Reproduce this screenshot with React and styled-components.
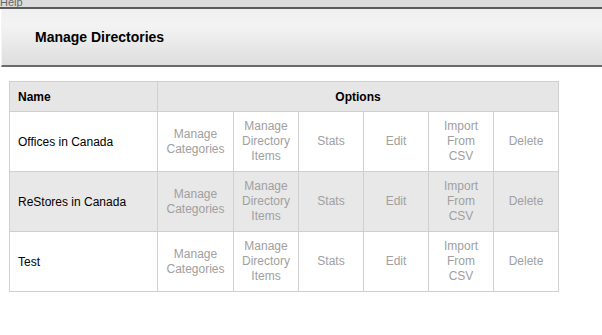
import styled, { createGlobalStyle } from "styled-components";

const GlobalStyle = createGlobalStyle`
  html, body {
    margin: 0;
    padding: 0;
    background: #fff;
    font-family: "Liberation Sans", Arial, sans-serif;
  }
`;

const Page = styled.div`
  width: 602px;
  height: 335px;
  overflow: hidden;
  background: #fff;
`;

const TopBar = styled.div`
  height: 7px;
  background: #dcdcdc;
  border-bottom: 2px solid #5a5a5a;
  overflow: hidden;
  font-size: 11px;
  line-height: 4px;
  color: #666;
  padding-left: 0;
`;

const Header = styled.div`
  height: 56px;
  margin-left: 1px;
  border-left: 1px solid #f4f4f4;
  background: linear-gradient(to bottom, #f0f0f0 0%, #f3f3f3 30%, #dedede 100%);
  border-bottom: 2px solid #6a6a6a;
  display: flex;
  align-items: center;
  padding-left: 33px;
`;

const Title = styled.h1`
  margin: 0;
  font-size: 14px;
  font-weight: bold;
  color: #000;
  padding-bottom: 1px;
`;

const Table = styled.table`
  margin: 14px 0 0 9px;
  border-collapse: collapse;
  font-size: 12px;
`;

const Th = styled.th`
  height: 29px;
  padding: 0 8px;
  background: #e6e6e6;
  border: 1px solid #cfcfcf;
  text-align: ${(p) => (p.$left ? "left" : "center")};
  font-weight: bold;
  color: #000;
  width: ${(p) => p.$w || "auto"};
`;

const Row = styled.tr`
  background: ${(p) => (p.$alt ? "#e8e8e8" : "#fff")};
`;

const NameCell = styled.td`
  height: 59px;
  padding: 0 8px;
  border: 1px solid #cfcfcf;
  color: #000;
  width: 131px;
`;

const OptCell = styled.td`
  padding: 0;
  border: 1px solid #cfcfcf;
  color: #a0a0a0;
  text-align: center;
  line-height: 15px;
  width: ${(p) => p.$w};
`;

const options = [
  { label: ["Manage", "Categories"], w: "75px" },
  { label: ["Manage", "Directory", "Items"], w: "64px" },
  { label: ["Stats"], w: "64px" },
  { label: ["Edit"], w: "64px" },
  { label: ["Import", "From", "CSV"], w: "64px" },
  { label: ["Delete"], w: "64px" },
];

const rows = ["Offices in Canada", "ReStores in Canada", "Test"];

export default function App() {
  return (
    <Page>
      <GlobalStyle />
      <TopBar>Help</TopBar>
      <Header>
        <Title>Manage Directories</Title>
      </Header>
      <Table>
        <thead>
          <tr>
            <Th $left $w="131px">Name</Th>
            <Th colSpan={6}>Options</Th>
          </tr>
        </thead>
        <tbody>
          {rows.map((name, i) => (
            <Row key={name} $alt={i === 1}>
              <NameCell>{name}</NameCell>
              {options.map((o) => (
                <OptCell key={o.label.join()} $w={o.w}>
                  {o.label.map((l, j) => (
                    <div key={j}>{l}</div>
                  ))}
                </OptCell>
              ))}
            </Row>
          ))}
        </tbody>
      </Table>
    </Page>
  );
}
